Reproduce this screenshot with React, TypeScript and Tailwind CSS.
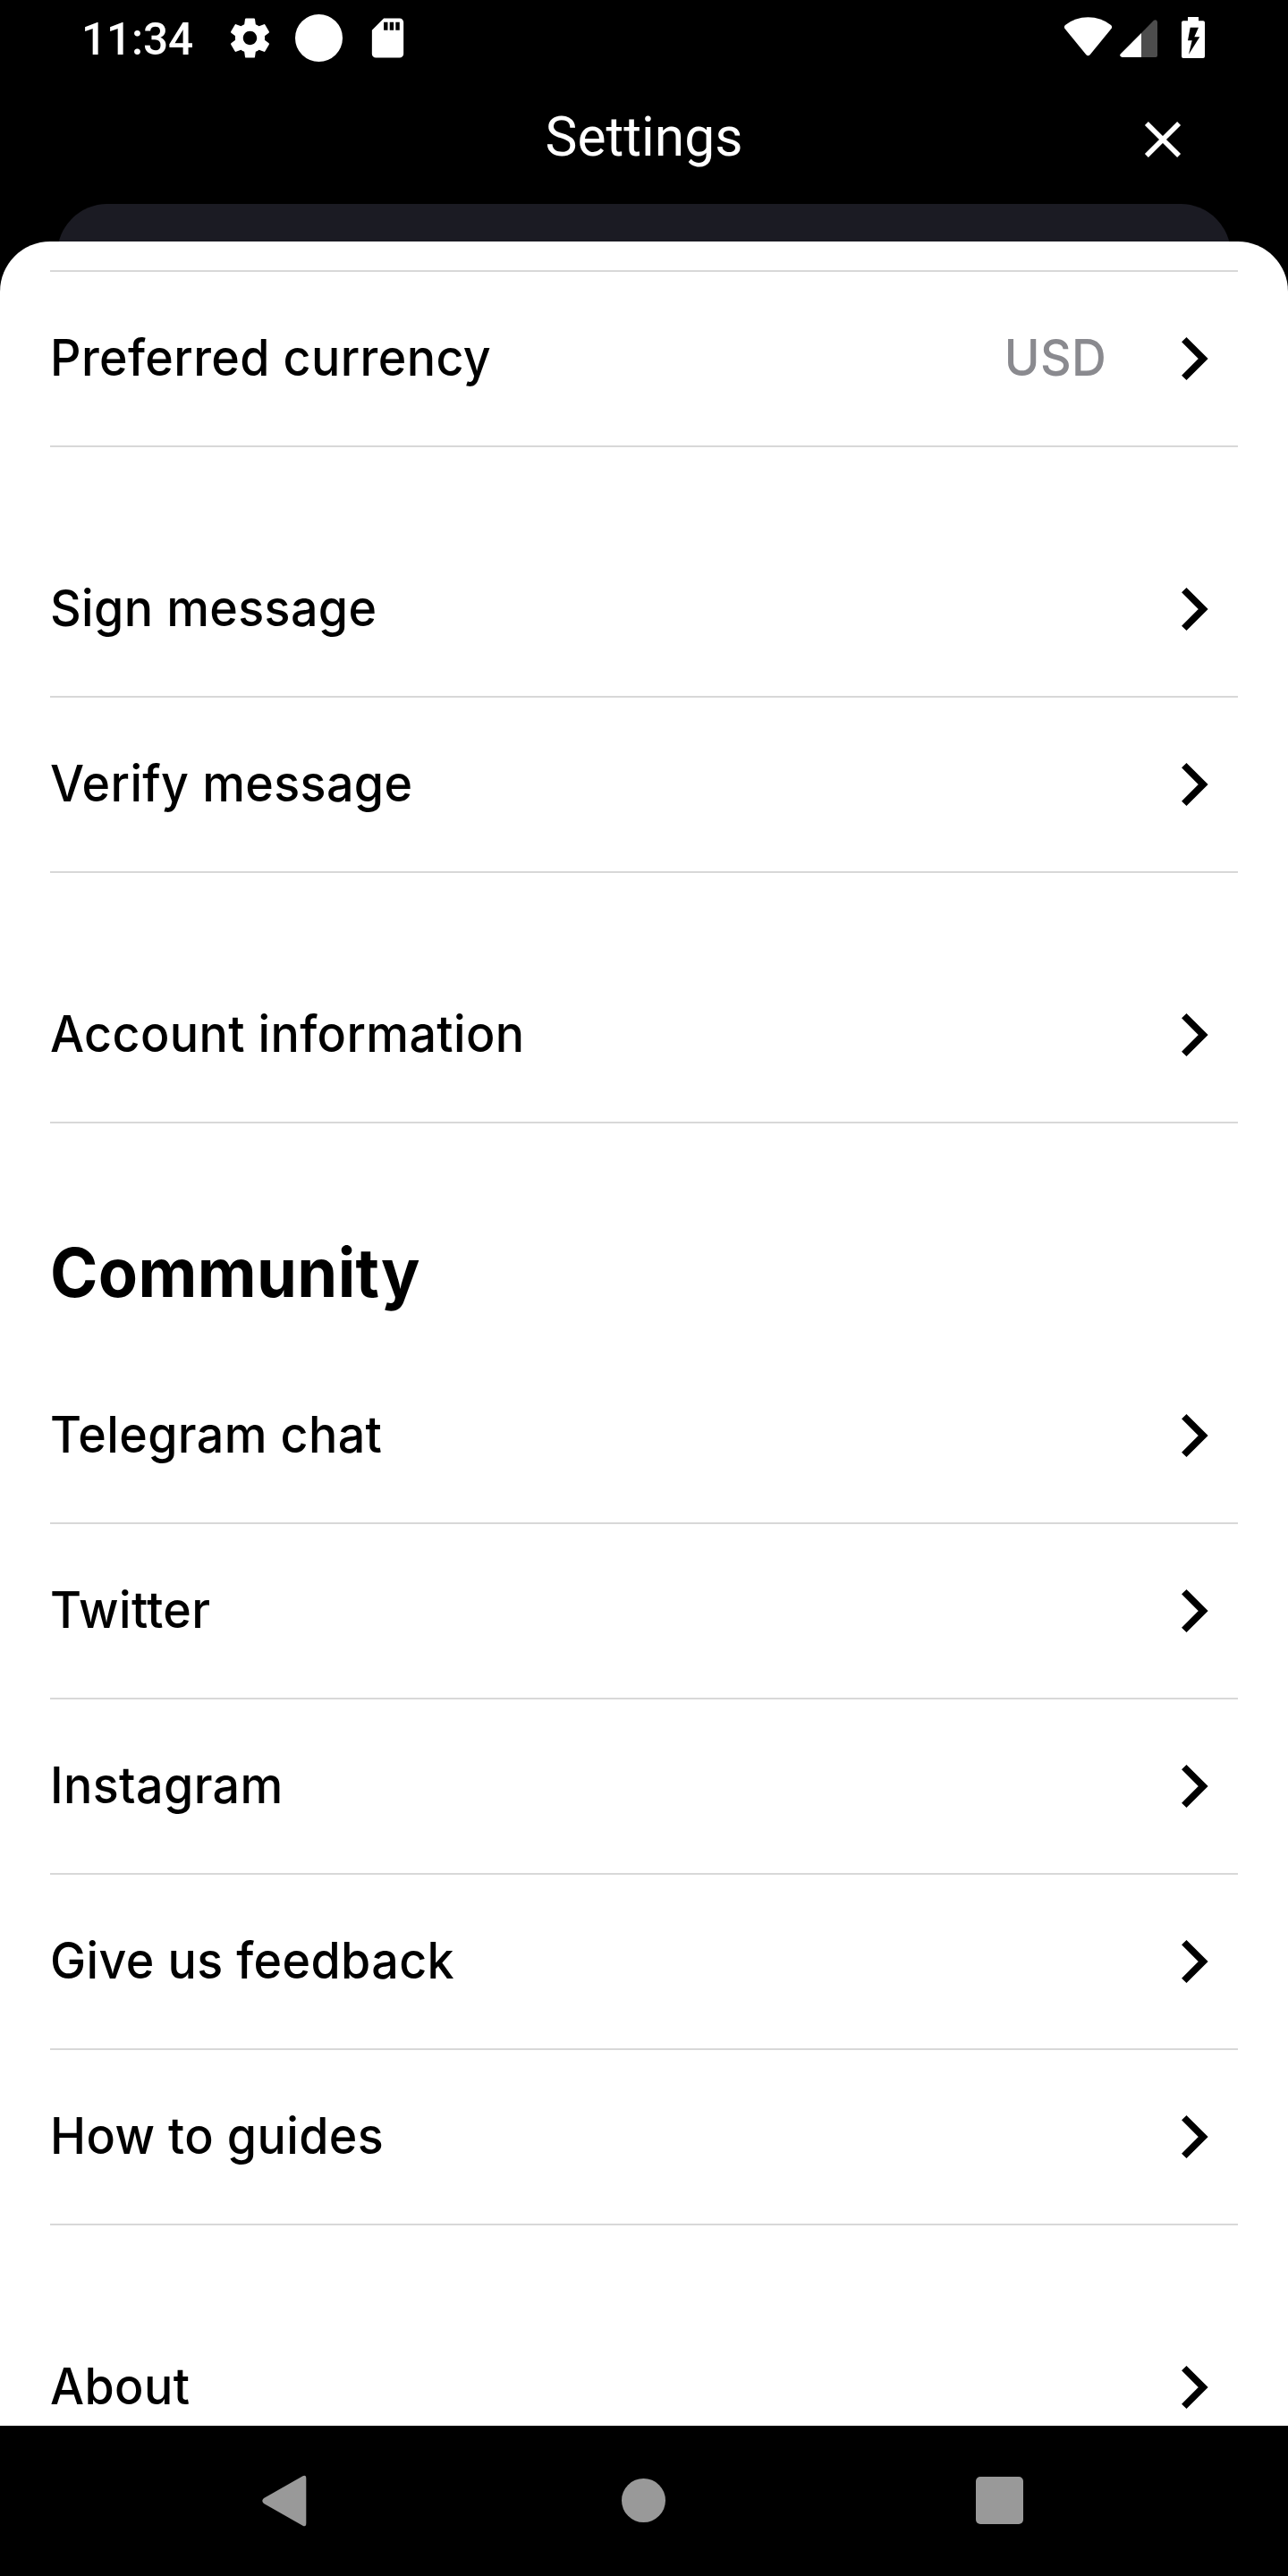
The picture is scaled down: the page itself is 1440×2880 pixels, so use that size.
import React from "react";

const GEAR =
  "M19.43 12.98c.04-.32.07-.64.07-.98s-.03-.66-.07-.98l2.11-1.65c.19-.15.24-.42.12-.64l-2-3.46c-.12-.22-.39-.3-.61-.22l-2.49 1c-.52-.4-1.08-.73-1.69-.98l-.38-2.65C14.46 2.18 14.25 2 14 2h-4c-.25 0-.46.18-.49.42l-.38 2.65c-.61.25-1.17.59-1.69.98l-2.49-1c-.23-.09-.49 0-.61.22l-2 3.46c-.13.22-.07.49.12.64l2.11 1.65c-.04.32-.07.65-.07.98s.03.66.07.98l-2.11 1.65c-.19.15-.24.42-.12.64l2 3.46c.12.22.39.3.61.22l2.49-1c.52.4 1.08.73 1.69.98l.38 2.65c.03.24.24.42.49.42h4c.25 0 .46-.18.49-.42l.38-2.65c.61-.25 1.17-.59 1.69-.98l2.49 1c.23.09.49 0 .61-.22l2-3.46c.12-.22.07-.49-.12-.64l-2.11-1.65zM12 15.5c-1.93 0-3.5-1.57-3.5-3.5s1.57-3.5 3.5-3.5 3.5 1.57 3.5 3.5-1.57 3.5-3.5 3.5z";

const SD_CARD =
  "M18 2h-8L4.02 8 4 20c0 1.1.9 2 2 2h12c1.1 0 2-.9 2-2V4c0-1.1-.9-2-2-2zm-6 6h-2V4h2v4zm3 0h-2V4h2v4zm3 0h-2V4h2v4z";

function StatusBar() {
  return (
    <div className="flex h-[84px] shrink-0 items-center pr-[93px] pl-[91px] text-white">
      <span className="w-[162px] shrink-0 pt-[6px] font-['Roboto',sans-serif] text-[49.5px] leading-none font-medium tracking-[-0.1px]">
        11:34
      </span>
      <div className="flex grow gap-[24px]">
        <svg width="53" height="53" viewBox="0 0 24 24" fill="currentColor">
          <path d={GEAR} />
        </svg>
        <div className="size-[53px] rounded-full bg-white" />
        <svg width="53" height="53" viewBox="0 0 24 24" fill="currentColor">
          <path d={SD_CARD} />
        </svg>
      </div>
      <svg className="mr-[9px]" width="53" height="84" viewBox="0 0 53 84" fill="currentColor">
        <path d="M1 28Q12 19.3 26.5 19.3Q41 19.3 52 28Q54 30 52.3 32.3L28.8 61Q26.5 63.5 24.2 61L.7 32.3Q-1 30 1 28Z" />
      </svg>
      <svg className="mr-[27px]" width="42" height="84" viewBox="0 0 42 84" fill="currentColor">
        <path d="M24 37V64H2.5Q-1 63 .6 60.4Z" />
        <path d="M24 37V64H40Q42 64 42 62V24.5Q41 21 38 22.8Z" fill="#4d4d4d" />
      </svg>
      <svg width="26" height="84" viewBox="0 0 26 84" fill="currentColor">
        <path d="M7 19H19V23.3H24Q26 23.3 26 25.3V63Q26 65 24 65H2Q0 65 0 63V25.3Q0 23.3 2 23.3H7Z" />
        <path d="M9.7 30.7H19L14.3 41.3H20.3L8 60.7L11.7 45.3H7Z" fill="#000" />
      </svg>
    </div>
  );
}

function Header() {
  return (
    <div className="grid h-[144px] shrink-0 grid-cols-[1fr_auto_1fr] items-center pr-[116px] text-white">
      <span />
      <h1 className="ml-[116px] pb-[3px] font-['Roboto',sans-serif] text-[60.5px] leading-none">Settings</h1>
      <svg className="justify-self-end" width="48" height="48" viewBox="0 0 48 48" stroke="currentColor" strokeWidth="5.6">
        <path d="M5.9 5.9L42.1 42.1M42.1 5.9L5.9 42.1" />
      </svg>
    </div>
  );
}

const Chevron = () => (
  <svg width="80" height="80" viewBox="0 0 80 80" className="shrink-0" fill="none">
    <path d="M19.8 18.6L41.2 40L19.8 61.4" stroke="#000" strokeWidth="7.7" />
  </svg>
);

function Row({ label, value }: { label: string; value?: string }) {
  return (
    <div className="flex h-[196px] shrink-0 items-center border-b-2 border-[#d8d8d8] text-[56px] leading-[68px] font-medium tracking-[0.4px]">
      <span className="grow origin-left scale-x-96 pb-[2px] whitespace-nowrap">{label}</span>
      {value && (
        <span className="mr-[67px] origin-right scale-x-96 pb-[2px] text-[#8a8a8f]">{value}</span>
      )}
      <Chevron />
    </div>
  );
}

function NavBar() {
  return (
    <div className="flex h-[168px] shrink-0 items-center bg-black pb-px pl-[293px] text-[#999]">
      <svg width="50" height="58" viewBox="0 0 50 58" fill="currentColor">
        <path d="M45.5 1.3Q49.3 -.5 49.3 4V54Q49.3 58.5 45.5 56.7L2 32Q-1.4 29 2 26Z" />
      </svg>
      <div className="ml-[352px] size-[49px] rounded-full bg-[#999]" />
      <div className="ml-[347px] size-[53px] rounded-[5px] bg-[#999]" />
    </div>
  );
}

export default function App() {
  return (
    <div className="flex h-[2880px] w-[1440px] flex-col overflow-hidden bg-black font-['Inter',sans-serif] text-black">
      <StatusBar />
      <Header />
      <div className="mx-[64px] -mb-[14px] h-[56px] shrink-0 rounded-t-[56px] bg-[#1b1b23]" />
      <div className="flex min-h-0 grow flex-col overflow-hidden rounded-t-[56px] bg-white px-14">
        <div className="mt-[32px] h-[2px] shrink-0 bg-[#d8d8d8]" />
        <Row label="Preferred currency" value="USD" />
        <div className="h-[84px] shrink-0" />
        <Row label="Sign message" />
        <Row label="Verify message" />
        <div className="h-[84px] shrink-0" />
        <Row label="Account information" />
        <h2 className="mt-[120px] mb-[40px] origin-left scale-x-95 text-[76px] leading-[92px] font-bold tracking-[0.4px]">
          Community
        </h2>
        <Row label="Telegram chat" />
        <Row label="Twitter" />
        <Row label="Instagram" />
        <Row label="Give us feedback" />
        <Row label="How to guides" />
        <div className="h-[84px] shrink-0" />
        <Row label="About" />
      </div>
      <NavBar />
    </div>
  );
}
